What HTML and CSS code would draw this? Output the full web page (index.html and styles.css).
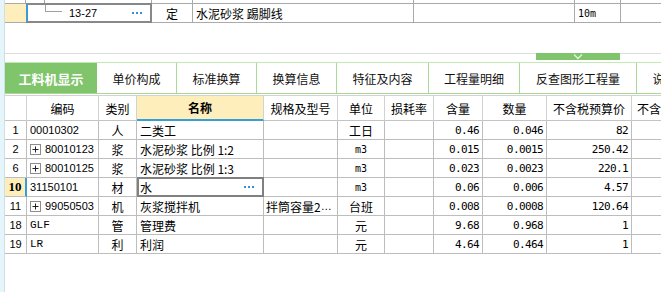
FILE: index.html
```html
<!DOCTYPE html>
<html lang="zh-CN">
<head>
  <meta charset="UTF-8">
  <title>工料机显示</title>
  <link rel="stylesheet" href="styles.css">
</head>
<body>
  <div class="page">
    <div class="side"></div>
    <div class="main">

      <!-- 定额行 -->
      <div class="urow prev">
        <div class="uc"></div>
        <div class="uc u1"><span class="stem"></span></div>
        <div class="uc"></div>
        <div class="uc"></div>
        <div class="uc"></div>
        <div class="uc"></div>
        <div class="uc"></div>
      </div>
      <div class="urow">
        <div class="uc u0"></div>
        <div class="uc u1 sel">
          <span class="tree"></span>
          <span class="code">13-27</span>
          <svg class="more" width="11" height="3" viewBox="0 0 11 3"><rect x="0" y="0" width="2" height="2"/><rect x="4" y="0" width="2" height="2"/><rect x="8" y="0" width="2" height="2"/></svg>
        </div>
        <div class="uc mid">定</div>
        <div class="uc">水泥砂浆 踢脚线</div>
        <div class="uc"></div>
        <div class="uc"><span class="m">10m</span></div>
        <div class="uc"></div>
      </div>

      <div class="divider">
        <div class="fold">
          <svg width="10" height="6" viewBox="0 0 10 6"><polyline points="1,0.5 5,4.5 9,0.5" fill="none" stroke="#e3f4dc" stroke-width="1.4"/></svg>
        </div>
      </div>

      <div class="tabs">
        <div class="tab active" style="width:92px">工料机显示</div>
        <div class="tab" style="width:80px">单价构成</div>
        <div class="tab" style="width:80px">标准换算</div>
        <div class="tab" style="width:80px">换算信息</div>
        <div class="tab" style="width:92px">特征及内容</div>
        <div class="tab" style="width:91px">工程量明细</div>
        <div class="tab" style="width:117px">反查图形工程量</div>
        <div class="tab" style="width:80px">说明信息</div>
      </div>

      <div class="grid">
        <div class="row head">
          <div class="c"></div>
          <div class="c">编码</div>
          <div class="c">类别</div>
          <div class="c sort">名称</div>
          <div class="c">规格及型号</div>
          <div class="c">单位</div>
          <div class="c">损耗率</div>
          <div class="c">含量</div>
          <div class="c">数量</div>
          <div class="c">不含税预算价</div>
          <div class="c last">不含税市场价</div>
        </div>

        <div class="row">
          <div class="c num">1</div>
          <div class="c code">00010302</div>
          <div class="c mid">人</div>
          <div class="c name">二类工</div>
          <div class="c"></div>
          <div class="c mid">工日</div>
          <div class="c"></div>
          <div class="c n">0.46</div>
          <div class="c n">0.046</div>
          <div class="c n">82</div>
          <div class="c"></div>
        </div>

        <div class="row">
          <div class="c num">2</div>
          <div class="c code"><svg class="plus" width="11" height="11" viewBox="0 0 11 11"><rect x="0.5" y="0.5" width="10" height="10" fill="#fff" stroke="#8c8c8c"/><path d="M2.5 5.5h6M5.5 2.5v6" stroke="#222"/></svg>80010123</div>
          <div class="c mid">浆</div>
          <div class="c name">水泥砂浆 比例 1:2</div>
          <div class="c"></div>
          <div class="c mid m">m3</div>
          <div class="c"></div>
          <div class="c n">0.015</div>
          <div class="c n">0.0015</div>
          <div class="c n">250.42</div>
          <div class="c"></div>
        </div>

        <div class="row">
          <div class="c num">6</div>
          <div class="c code"><svg class="plus" width="11" height="11" viewBox="0 0 11 11"><rect x="0.5" y="0.5" width="10" height="10" fill="#fff" stroke="#8c8c8c"/><path d="M2.5 5.5h6M5.5 2.5v6" stroke="#222"/></svg>80010125</div>
          <div class="c mid">浆</div>
          <div class="c name">水泥砂浆 比例 1:3</div>
          <div class="c"></div>
          <div class="c mid m">m3</div>
          <div class="c"></div>
          <div class="c n">0.023</div>
          <div class="c n">0.0023</div>
          <div class="c n">220.1</div>
          <div class="c"></div>
        </div>

        <div class="row">
          <div class="c num cur">10</div>
          <div class="c code">31150101</div>
          <div class="c mid">材</div>
          <div class="c name sel">水
            <svg class="more" width="11" height="3" viewBox="0 0 11 3"><rect x="0" y="0" width="2" height="2"/><rect x="4" y="0" width="2" height="2"/><rect x="8" y="0" width="2" height="2"/></svg>
          </div>
          <div class="c"></div>
          <div class="c mid m">m3</div>
          <div class="c"></div>
          <div class="c n">0.06</div>
          <div class="c n">0.006</div>
          <div class="c n">4.57</div>
          <div class="c"></div>
        </div>

        <div class="row">
          <div class="c num">11</div>
          <div class="c code"><svg class="plus" width="11" height="11" viewBox="0 0 11 11"><rect x="0.5" y="0.5" width="10" height="10" fill="#fff" stroke="#8c8c8c"/><path d="M2.5 5.5h6M5.5 2.5v6" stroke="#222"/></svg>99050503</div>
          <div class="c mid">机</div>
          <div class="c name">灰浆搅拌机</div>
          <div class="c spec">拌筒容量2<span class="ell">…</span></div>
          <div class="c mid">台班</div>
          <div class="c"></div>
          <div class="c n">0.008</div>
          <div class="c n">0.0008</div>
          <div class="c n">120.64</div>
          <div class="c"></div>
        </div>

        <div class="row">
          <div class="c num">18</div>
          <div class="c code m">GLF</div>
          <div class="c mid">管</div>
          <div class="c name">管理费</div>
          <div class="c"></div>
          <div class="c mid">元</div>
          <div class="c"></div>
          <div class="c n">9.68</div>
          <div class="c n">0.968</div>
          <div class="c n">1</div>
          <div class="c"></div>
        </div>

        <div class="row">
          <div class="c num">19</div>
          <div class="c code m">LR</div>
          <div class="c mid">利</div>
          <div class="c name">利润</div>
          <div class="c"></div>
          <div class="c mid">元</div>
          <div class="c"></div>
          <div class="c n">4.64</div>
          <div class="c n">0.464</div>
          <div class="c n">1</div>
          <div class="c"></div>
        </div>
      </div>

    </div>
  </div>
</body>
</html>
```

FILE: styles.css
```css
html, body {
  margin: 0; padding: 0;
  background: #fff;
  font-family: "Noto Sans CJK SC", sans-serif;
  font-size: 12px;
  color: #000;
  overflow: hidden;
}
.page { display: flex; height: 292px; }
.side {
  flex: none;
  width: 4px;
  background: #e4f5fc;
  border-right: 1px solid #d4dde1;
}
.main { flex: 1; overflow: hidden; }

/* upper (quota) table */
.urow {
  display: grid;
  grid-template-columns: 21px 126px 41px 221px 161px 46px 80px;
  height: 19px;
}
.urow.prev { height: 4px; }
.uc {
  box-sizing: border-box;
  border-right: 1px solid #aaa;
  border-bottom: 1px solid #aaa;
  display: flex;
  align-items: center;
  padding-left: 3px;
  white-space: nowrap;
  overflow: hidden;
}
.urow.prev .uc { padding: 0; align-items: stretch; }
.stem { margin-left: 18px; border-left: 1px solid #a0a0a0; }
.u0 { background: #fdeebc; border-right: none; }
.uc.sel {
  border: 2px solid #888;
  border-left-color: #3a9bd5;
  margin-top: -1px;
  height: 20px;
  padding-left: 0;
  align-items: flex-start;
}
.tree {
  margin-left: 17px;
  width: 16px;
  height: 6px;
  border-left: 1px solid #a0a0a0;
  border-bottom: 1px solid #a0a0a0;
}
.uc .code {
  align-self: center;
  margin-left: 4px;
  font-family: "Liberation Sans", sans-serif;
  font-size: 11px;
}
.more { fill: #3b8fd6; margin-left: auto; margin-right: 7px; align-self: center; }
.mid { justify-content: center; padding-left: 0; }
.m { font-family: "DejaVu Sans Mono", monospace; font-size: 10px; }

/* fold line */
.divider {
  margin-top: 30px;
  height: 7px;
  background: linear-gradient(#dcdcdc, #dcdcdc) top / 100% 1px no-repeat;
}
.fold {
  margin-left: 531px;
  width: 84px;
  height: 7px;
  background: #80c46c;
  display: flex;
  justify-content: center;
  align-items: center;
}

/* tabs */
.tabs {
  margin-top: 2px;
  display: flex;
  height: 30px;
  border-top: 1px solid #c4e8b5;
  border-bottom: 1px solid #a6da92;
  white-space: nowrap;
}
.tab {
  flex: none;
  box-sizing: border-box;
  border-right: 1px solid #a8dc96;
  display: flex;
  align-items: center;
  justify-content: center;
  font-size: 12px;
  color: #111;
}
.tab.active {
  background: #80c46c;
  color: #fff;
  font-weight: bold;
  font-size: 13px;
  border-right: none;
}

/* material grid */
.grid { margin-top: 1px; }
.row {
  display: grid;
  grid-template-columns: 22px 72px 38px 127px 74px 47px 49px 49px 64px 85px 80px;
  height: 19px;
}
.row.head { height: 26px; }
.c {
  box-sizing: border-box;
  border-right: 1px solid #bdbdbd;
  border-bottom: 1px solid #bdbdbd;
  display: flex;
  align-items: center;
  white-space: nowrap;
  overflow: hidden;
}
.head .c {
  justify-content: center;
  border-top: 1px solid #d2d2d2;
  border-right-color: #d2d2d2;
  border-bottom-color: #c4c4c4;
  font-size: 12px;
}
.head .sort {
  background: #fdeebc;
  font-weight: bold;
  border-bottom: 2px solid #35a0d6;
}
.head .last { justify-content: flex-start; padding-left: 5px; }
.num {
  justify-content: center;
  font-family: "Liberation Sans", sans-serif;
  font-size: 11px;
}
.num.cur {
  background: #fdeebc;
  border-right: 2px solid #35a0d6;
  font-family: "Liberation Serif", serif;
  font-weight: bold;
  font-size: 13px;
}
.code {
  padding-left: 3px;
  font-family: "Liberation Sans", sans-serif;
  font-size: 11px;
}
.code.m { font-family: "Liberation Mono", monospace; font-size: 11px; }
.plus { margin-right: 4px; flex: none; }
.name { padding-left: 3px; }
.spec { padding-left: 2px; }
.name.sel {
  border: 2px solid #808080;
  margin-top: -1px;
  height: 20px;
  padding-left: 1px;
}
.ell { font-family: "Liberation Sans", sans-serif; font-size: 11px; }
.n {
  justify-content: flex-end;
  padding-right: 3px;
  font-family: "DejaVu Sans Mono", monospace;
  font-size: 11px;
  letter-spacing: -0.6px;
}
```
